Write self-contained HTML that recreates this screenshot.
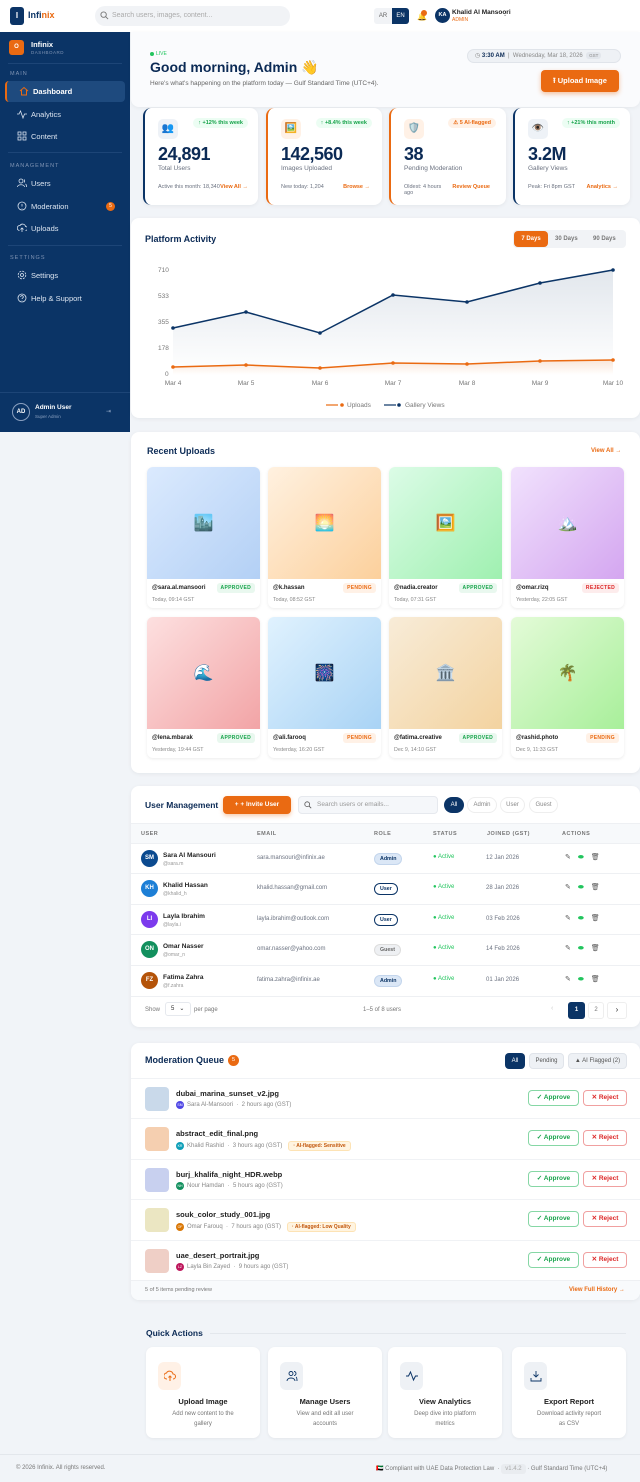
<!DOCTYPE html>
<html><head><meta charset="utf-8">
<style>
*{box-sizing:border-box;margin:0;padding:0}
body{width:640px;height:1482px;background:#f1f4f8;font-family:"Liberation Sans",sans-serif;position:relative;overflow:hidden;color:#1f2937}
.a{position:absolute}
.card{position:absolute;background:#fff;border-radius:8px;box-shadow:0 1px 4px rgba(0,0,0,.06)}
.nav{position:absolute;left:5px;width:120px;height:21px;font-size:7.5px;color:#dbe4f0;display:flex;align-items:center;padding-left:26px}
.nav svg{position:absolute;left:12px;top:5px}
.sec{position:absolute;left:10px;font-size:5.5px;letter-spacing:1px;color:#7f93b3}
.stat{position:absolute;top:108px;height:97px;background:#fff;border-radius:8px;border-left:2px solid #0b3466;box-shadow:0 1px 4px rgba(0,0,0,.06)}
.stat .ic{position:absolute;left:13px;top:11px;width:20px;height:20px;border-radius:5px;background:#eef2f7;font-size:10px;text-align:center;line-height:20px}
.stat .bd{position:absolute;right:10px;top:10px;font-size:5.5px;font-weight:bold;color:#16a34a;background:#ecfdf3;padding:2px 5px;border-radius:6px}
.stat .n{position:absolute;left:13px;top:36px;font-size:18px;font-weight:bold;color:#0b2a55;letter-spacing:-.5px}
.stat .l{position:absolute;left:13px;top:57px;font-size:6.5px;color:#6b7280}
.stat .f{position:absolute;left:13px;top:76px;font-size:5.5px;color:#6b7280}
.stat .k{position:absolute;right:12px;top:76px;font-size:5.5px;font-weight:bold;color:#ea6a12}
.tile{position:absolute;width:113px;height:141px;background:#fff;border-radius:6px;box-shadow:0 1px 3px rgba(0,0,0,.08);overflow:hidden}
.tile .im{height:112px;display:flex;align-items:center;justify-content:center;font-size:16px}
.tile .u{position:absolute;left:5px;top:118px;font-size:6px;font-weight:bold;color:#222}
.tile .t{position:absolute;left:5px;top:130px;font-size:5.3px;color:#888}
.tile .s{position:absolute;right:5px;top:116px;font-size:5px;font-weight:bold;padding:2px 4px;border-radius:3px;letter-spacing:.3px}
.ap{color:#16a34a;background:#e9f8ef}.pe{color:#ea6a12;background:#fff1e6}.re{color:#dc2626;background:#fdecec}
.row{position:absolute;left:0;width:510px;height:30px;border-top:1px solid #eef0f3;font-size:6px;color:#6b7280}
.row .av{position:absolute;left:10px;top:6px;width:17px;height:17px;border-radius:50%;color:#fff;font-size:6px;font-weight:bold;text-align:center;line-height:17px}
.row .nm{position:absolute;left:32px;top:8px;font-size:6.5px;font-weight:bold;color:#222}
.row .hd{position:absolute;left:32px;top:17px;font-size:5px;color:#999}
.row .em{position:absolute;left:126px;top:11px}
.row .rl{position:absolute;left:243px;top:9px;font-size:5.3px;font-weight:bold;padding:2px 5px;border-radius:6px}
.row .st{position:absolute;left:302px;top:10px;color:#22c55e}
.row .jd{position:absolute;left:355px;top:11px}
.row .ac{position:absolute;left:434px;top:9px;font-size:7px;color:#555;letter-spacing:7px}
.adm{background:#dbe7f6;color:#0b3466;border:1px solid #c3d5ec}.usr{background:#fff;color:#0b3466;border:1px solid #0b3466}.gst{background:#eef0f3;color:#666;border:1px solid #ddd}
.mq{position:absolute;left:0;width:510px;height:40px;border-top:1px solid #f0f2f5}
.mq .th{position:absolute;left:14px;top:8px;width:24px;height:24px;border-radius:4px}
.mq .fn{position:absolute;left:45px;top:10px;font-size:7.5px;font-weight:bold;color:#222}
.mq .by{position:absolute;left:45px;top:22px;font-size:6px;color:#888;display:flex;align-items:center;gap:3px}
.mq .by i{display:inline-block;width:8px;height:8px;border-radius:50%;font-style:normal;color:#fff;font-size:3.5px;text-align:center;line-height:8px}
.mq .fl{font-size:5px;font-weight:bold;color:#c2570c;background:#fff4e0;border:1px solid #fde3b5;padding:1px 4px;border-radius:3px;margin-left:3px}
.mq .bt{position:absolute;top:11px;height:16px;border-radius:4px;font-size:6.5px;font-weight:bold;text-align:center;line-height:14px}
.mq .ok{left:397px;width:51px;border:1px solid #86d7a5;color:#16a34a}
.mq .no{left:452px;width:44px;border:1px solid #f0a0a0;color:#dc2626}
.qa{position:absolute;top:1347px;width:114px;height:91px;background:#fff;border-radius:7px;box-shadow:0 1px 3px rgba(0,0,0,.06);text-align:center}
.qa .ic{position:absolute;left:12px;top:15px;width:23px;height:28px;border-radius:6px;background:#eef1f5}
.qa .h{position:absolute;left:0;right:0;top:50px;font-size:7.5px;font-weight:bold;color:#222}
.qa .d{position:absolute;left:22px;right:22px;top:62px;font-size:6px;color:#777;line-height:10px}
</style></head><body>

<!-- header -->
<div class="a" style="left:0;top:0;width:640px;height:32px;background:#fff;box-shadow:0 1px 3px rgba(0,0,0,.06)"></div>
<div class="a" style="left:10px;top:7px;width:14px;height:18px;border-radius:3px;background:#0b3466;color:#fff;font-size:8px;font-weight:bold;text-align:center;line-height:18px">I</div>
<div class="a" style="left:28px;top:10px;font-size:9px;font-weight:bold;color:#0b3466">Infi<span style="color:#ea6a12">nix</span></div>
<div class="a" style="left:95px;top:6px;width:195px;height:20px;border-radius:10px;background:#f1f3f6"></div>
<svg class="a" style="left:100px;top:11px" width="9" height="9" viewBox="0 0 10 10"><circle cx="4" cy="4" r="3" fill="none" stroke="#777" stroke-width="1"/><path d="M6.3 6.3L9 9" stroke="#777"/></svg>
<div class="a" style="left:112px;top:12px;font-size:7px;color:#aaa">Search users, images, content...</div>
<div class="a" style="left:374px;top:8px;width:18px;height:16px;background:#f1f3f6;border-radius:3px 0 0 3px;font-size:6px;color:#666;text-align:center;line-height:16px">AR</div>
<div class="a" style="left:392px;top:8px;width:17px;height:16px;background:#0b3466;border-radius:0 3px 3px 0;font-size:6px;color:#fff;text-align:center;line-height:16px">EN</div>
<div class="a" style="left:417px;top:12px;font-size:8px;color:#0b3466">🔔</div>
<div class="a" style="left:421px;top:10px;width:6px;height:6px;border-radius:50%;background:#ea6a12"></div>
<div class="a" style="left:435px;top:8px;width:15px;height:15px;border-radius:50%;background:#0b3466;color:#fff;font-size:5.5px;font-weight:bold;text-align:center;line-height:15px">KA</div>
<div class="a" style="left:452px;top:9px;font-size:6.5px;font-weight:bold;color:#222">Khalid Al Mansoori</div>
<div class="a" style="left:452px;top:17px;font-size:5px;color:#ea6a12">ADMIN</div>
<div class="a" style="left:503px;top:12px;font-size:5px;color:#777">⌄</div>

<!-- sidebar -->
<div class="a" style="left:0;top:32px;width:130px;height:400px;background:#0b3466"></div>
<div class="a" style="left:9px;top:40px;width:15px;height:15px;border-radius:3px;background:#ea6a12;color:#fff;font-size:6px;font-weight:bold;text-align:center;line-height:15px">O</div>
<div class="a" style="left:31px;top:40px;font-size:7.5px;font-weight:bold;color:#fff">Infinix</div>
<div class="a" style="left:31px;top:50px;font-size:4.5px;color:#7f93b3;letter-spacing:.5px">DASHBOARD</div>
<div class="a" style="left:8px;top:63px;width:114px;height:1px;background:#1d4577"></div>
<div class="sec" style="top:71px">MAIN</div>
<div class="nav" style="top:81px;background:#1e4a7e;border-left:2px solid #ea6a12;border-radius:4px;color:#fff;font-weight:bold"><svg width="10" height="10" viewBox="0 0 10 10"><path d="M1 5L5 1.5 9 5M2.5 4v5h5V4" fill="none" stroke="#ea6a12"/></svg>Dashboard</div>
<div class="nav" style="top:104px"><svg width="10" height="10" viewBox="0 0 10 10"><path d="M0 5h2l1.5-3 2.5 7 1.5-4H10" fill="none" stroke="#dbe4f0" stroke-width=".8"/></svg>Analytics</div>
<div class="nav" style="top:126px"><svg width="10" height="10" viewBox="0 0 10 10"><g fill="none" stroke="#dbe4f0" stroke-width=".8"><rect x="1" y="1" width="3" height="3"/><rect x="6" y="1" width="3" height="3"/><rect x="1" y="6" width="3" height="3"/><rect x="6" y="6" width="3" height="3"/></g></svg>Content</div>
<div class="a" style="left:8px;top:152px;width:114px;height:1px;background:#1d4577"></div>
<div class="sec" style="top:163px">MANAGEMENT</div>
<div class="nav" style="top:173px"><svg width="10" height="10" viewBox="0 0 10 10"><g fill="none" stroke="#dbe4f0" stroke-width=".8"><circle cx="4" cy="3" r="2"/><path d="M0.5 9c0-3 7-3 7 0M7 1.5a2 2 0 010 3M8.5 6c1 .5 1 2 1 3"/></g></svg>Users</div>
<div class="nav" style="top:196px"><svg width="10" height="10" viewBox="0 0 10 10"><circle cx="5" cy="5" r="4" fill="none" stroke="#dbe4f0" stroke-width=".8"/><path d="M5 3v2.5M5 7v.5" stroke="#dbe4f0" stroke-width=".8"/></svg>Moderation</div>
<div class="a" style="left:106px;top:202px;width:9px;height:9px;border-radius:50%;background:#ea6a12;color:#fff;font-size:5px;text-align:center;line-height:9px">5</div>
<div class="nav" style="top:218px"><svg width="10" height="10" viewBox="0 0 10 10"><path d="M2.5 7.5a2.5 2.5 0 01.5-5 3 3 0 015.5 1 2 2 0 010 4M5 9V5M3.5 6.5L5 5l1.5 1.5" fill="none" stroke="#dbe4f0" stroke-width=".8"/></svg>Uploads</div>
<div class="a" style="left:8px;top:245px;width:114px;height:1px;background:#1d4577"></div>
<div class="sec" style="top:255px">SETTINGS</div>
<div class="nav" style="top:265px"><svg width="10" height="10" viewBox="0 0 10 10"><circle cx="5" cy="5" r="3.8" fill="none" stroke="#dbe4f0" stroke-width=".8" stroke-dasharray="2 1"/><circle cx="5" cy="5" r="1.5" fill="none" stroke="#dbe4f0" stroke-width=".8"/></svg>Settings</div>
<div class="nav" style="top:288px"><svg width="10" height="10" viewBox="0 0 10 10"><circle cx="5" cy="5" r="4" fill="none" stroke="#dbe4f0" stroke-width=".8"/><path d="M3.7 4a1.3 1.3 0 112 1c-.6.3-.7.6-.7 1M5 7.3v.3" fill="none" stroke="#dbe4f0" stroke-width=".8"/></svg>Help &amp; Support</div>
<div class="a" style="left:0;top:392px;width:130px;height:1px;background:#1d4577"></div>
<div class="a" style="left:12px;top:403px;width:18px;height:18px;border-radius:50%;background:#0b3466;border:1px solid #8aa0c0;color:#fff;font-size:6px;font-weight:bold;text-align:center;line-height:16px">AD</div>
<div class="a" style="left:35px;top:404px;font-size:6.5px;font-weight:bold;color:#fff">Admin User</div>
<div class="a" style="left:35px;top:414px;font-size:4.5px;color:#8aa0c0">Super Admin</div>
<div class="a" style="left:106px;top:408px;font-size:6px;color:#8aa0c0">⇥</div>

<!-- hero -->
<div class="a" style="left:131px;top:32px;width:509px;height:75px;background:#fafbfd;border-radius:0 0 8px 8px;box-shadow:0 1px 4px rgba(0,0,0,.05)"></div>
<div class="a" style="left:150px;top:52px;width:4px;height:4px;border-radius:50%;background:#22c55e"></div>
<div class="a" style="left:156px;top:51px;font-size:5px;color:#22c55e">LIVE</div>
<div class="a" style="left:150px;top:59px;font-size:14px;font-weight:bold;color:#0b2a55">Good morning, Admin 👋</div>
<div class="a" style="left:150px;top:80px;font-size:6.5px;color:#666">Here's what's happening on the platform today — Gulf Standard Time (UTC+4).</div>
<div class="a" style="left:467px;top:49px;width:154px;height:14px;border-radius:7px;background:#eef1f5;border:1px solid #e0e4ea;font-size:6px;line-height:12px;color:#888;padding-left:7px">◷ <b style="color:#0b2a55">3:30 AM</b> &nbsp;|&nbsp; Wednesday, Mar 18, 2026 &nbsp;<span style="font-size:4.5px;background:#e2e6ec;padding:1px 3px;border-radius:3px">GST</span></div>
<div class="a" style="left:541px;top:70px;width:78px;height:22px;border-radius:4px;background:#ea6a12;color:#fff;font-size:7.5px;font-weight:bold;text-align:center;line-height:22px;box-shadow:0 2px 5px rgba(234,106,18,.4)">⭱ Upload Image</div>

<!-- stats -->
<div class="stat" style="left:143px;width:115px"><div class="ic">👥</div><div class="bd">↑ +12% this week</div><div class="n">24,891</div><div class="l">Total Users</div><div class="f">Active this month: 18,340</div><div class="k" style="right:10px">View All →</div></div>
<div class="stat" style="left:266px;width:116px;border-color:#ea6a12"><div class="ic" style="background:#fff1e6">🖼️</div><div class="bd">↑ +8.4% this week</div><div class="n">142,560</div><div class="l">Images Uploaded</div><div class="f">New today: 1,204</div><div class="k">Browse →</div></div>
<div class="stat" style="left:389px;width:117px;border-color:#ea6a12"><div class="ic" style="background:#fff1e6">🛡️</div><div class="bd" style="color:#ea6a12;background:#fff1e6">⚠ 5 AI-flagged</div><div class="n">38</div><div class="l">Pending Moderation</div><div class="f">Oldest: 4 hours<br>ago</div><div class="k" style="right:16px">Review Queue</div></div>
<div class="stat" style="left:513px;width:117px"><div class="ic">👁️</div><div class="bd">↑ +21% this month</div><div class="n">3.2M</div><div class="l">Gallery Views</div><div class="f">Peak: Fri 8pm GST</div><div class="k">Analytics →</div></div>

<!-- chart -->
<div class="card" style="left:131px;top:218px;width:509px;height:200px"></div>
<div class="a" style="left:145px;top:234px;font-size:9px;font-weight:bold;color:#0b2a55">Platform Activity</div>
<div class="a" style="left:513px;top:230px;width:113px;height:18px;border-radius:4px;background:#f1f3f6"></div>
<div class="a" style="left:514px;top:231px;width:34px;height:16px;border-radius:4px;background:#ea6a12;color:#fff;font-size:6px;font-weight:bold;text-align:center;line-height:16px">7 Days</div>
<div class="a" style="left:555px;top:236px;font-size:6px;color:#777;font-weight:bold">30 Days</div>
<div class="a" style="left:593px;top:236px;font-size:6px;color:#777;font-weight:bold">90 Days</div>
<svg class="a" style="left:131px;top:218px" width="509" height="200" viewBox="131 218 509 200">
<defs><linearGradient id="g1" x1="0" y1="0" x2="0" y2="1"><stop offset="0" stop-color="#0b3466" stop-opacity=".12"/><stop offset="1" stop-color="#0b3466" stop-opacity="0"/></linearGradient>
<linearGradient id="g2" x1="0" y1="0" x2="0" y2="1"><stop offset="0" stop-color="#ea6a12" stop-opacity=".15"/><stop offset="1" stop-color="#ea6a12" stop-opacity="0"/></linearGradient></defs>
<g font-family="Liberation Sans" font-size="6.5" fill="#777">
<text x="158" y="272">710</text><text x="158" y="298">533</text><text x="158" y="324">355</text><text x="158" y="350">178</text><text x="165" y="376">0</text>
<text x="173" y="385" text-anchor="middle">Mar 4</text><text x="246" y="385" text-anchor="middle">Mar 5</text><text x="320" y="385" text-anchor="middle">Mar 6</text><text x="393" y="385" text-anchor="middle">Mar 7</text><text x="467" y="385" text-anchor="middle">Mar 8</text><text x="540" y="385" text-anchor="middle">Mar 9</text><text x="613" y="385" text-anchor="middle">Mar 10</text>
<text x="347" y="407">Uploads</text><text x="405" y="407">Gallery Views</text></g>
<path d="M173 328L246 312L320 333L393 295L467 302L540 283L613 270L613 373L173 373Z" fill="url(#g1)"/>
<path d="M173 367L246 365L320 368L393 363L467 364L540 361L613 360L613 375L173 375Z" fill="url(#g2)"/>
<path d="M173 328L246 312L320 333L393 295L467 302L540 283L613 270" fill="none" stroke="#0b3466" stroke-width="1.5"/>
<path d="M173 367L246 365L320 368L393 363L467 364L540 361L613 360" fill="none" stroke="#ea6a12" stroke-width="1.5"/>
<g fill="#0b3466"><circle cx="173" cy="328" r="1.8"/><circle cx="246" cy="312" r="1.8"/><circle cx="320" cy="333" r="1.8"/><circle cx="393" cy="295" r="1.8"/><circle cx="467" cy="302" r="1.8"/><circle cx="540" cy="283" r="1.8"/><circle cx="613" cy="270" r="1.8"/></g>
<g fill="#ea6a12"><circle cx="173" cy="367" r="1.8"/><circle cx="246" cy="365" r="1.8"/><circle cx="320" cy="368" r="1.8"/><circle cx="393" cy="363" r="1.8"/><circle cx="467" cy="364" r="1.8"/><circle cx="540" cy="361" r="1.8"/><circle cx="613" cy="360" r="1.8"/></g>
<path d="M326 405h12" stroke="#ea6a12" stroke-width="1.2"/><circle cx="342" cy="405" r="1.8" fill="#ea6a12"/>
<path d="M384 405h12" stroke="#0b3466" stroke-width="1.2"/><circle cx="399" cy="405" r="1.8" fill="#0b3466"/>
</svg>

<!-- recent uploads -->
<div class="card" style="left:131px;top:432px;width:509px;height:341px"></div>
<div class="a" style="left:147px;top:446px;font-size:9px;font-weight:bold;color:#0b2a55">Recent Uploads</div>
<div class="a" style="left:591px;top:448px;font-size:6px;font-weight:bold;color:#ea6a12">View All →</div>
<div class="tile" style="left:147px;top:467px"><div class="im" style="background:linear-gradient(135deg,#dbeafe,#b3d0f5)">🏙️</div><div class="u">@sara.al.mansoori</div><div class="t">Today, 09:14 GST</div><div class="s ap">APPROVED</div></div>
<div class="tile" style="left:268px;top:467px"><div class="im" style="background:linear-gradient(135deg,#fff1e0,#fcd09c)">🌅</div><div class="u">@k.hassan</div><div class="t">Today, 08:52 GST</div><div class="s pe">PENDING</div></div>
<div class="tile" style="left:389px;top:467px"><div class="im" style="background:linear-gradient(135deg,#dcfce7,#9ff0b0)">🖼️</div><div class="u">@nadia.creator</div><div class="t">Today, 07:31 GST</div><div class="s ap">APPROVED</div></div>
<div class="tile" style="left:511px;top:467px"><div class="im" style="background:linear-gradient(135deg,#f1e2fd,#d4a6f0)">🏔️</div><div class="u">@omar.rizq</div><div class="t">Yesterday, 22:05 GST</div><div class="s re">REJECTED</div></div>
<div class="tile" style="left:147px;top:617px"><div class="im" style="background:linear-gradient(135deg,#fde0e0,#f2a4a6)">🌊</div><div class="u">@lena.mbarak</div><div class="t">Yesterday, 19:44 GST</div><div class="s ap">APPROVED</div></div>
<div class="tile" style="left:268px;top:617px"><div class="im" style="background:linear-gradient(135deg,#e0f2fe,#a9d3f5)">🎆</div><div class="u">@ali.farooq</div><div class="t">Yesterday, 16:20 GST</div><div class="s pe">PENDING</div></div>
<div class="tile" style="left:389px;top:617px"><div class="im" style="background:linear-gradient(135deg,#f8ecd8,#f3d3a0)">🏛️</div><div class="u">@fatima.creative</div><div class="t">Dec 9, 14:10 GST</div><div class="s ap">APPROVED</div></div>
<div class="tile" style="left:511px;top:617px"><div class="im" style="background:linear-gradient(135deg,#e4fbd8,#a8ef9a)">🌴</div><div class="u">@rashid.photo</div><div class="t">Dec 9, 11:33 GST</div><div class="s pe">PENDING</div></div>

<!-- user management -->
<div class="card" style="left:131px;top:786px;width:509px;height:241px;overflow:hidden">
<div class="a" style="left:14px;top:14px;font-size:8.5px;font-weight:bold;color:#0b2a55">User Management</div>
<div class="a" style="left:92px;top:10px;width:68px;height:18px;border-radius:4px;background:#ea6a12;color:#fff;font-size:6.5px;font-weight:bold;text-align:center;line-height:18px;box-shadow:0 2px 4px rgba(234,106,18,.35)">+ + Invite User</div>
<div class="a" style="left:167px;top:10px;width:140px;height:18px;border-radius:4px;background:#f5f7fa;border:1px solid #e6e9ee;font-size:6.5px;color:#999;line-height:16px;padding-left:18px">Search users or emails...</div>
<svg class="a" style="left:173px;top:15px" width="8" height="8" viewBox="0 0 10 10"><circle cx="4" cy="4" r="3" fill="none" stroke="#555"/><path d="M6.3 6.3L9 9" stroke="#555"/></svg>
<div class="a" style="left:313px;top:11px;width:20px;height:16px;border-radius:8px;background:#0b3466;color:#fff;font-size:6px;text-align:center;line-height:16px">All</div>
<div class="a" style="left:336px;top:11px;width:30px;height:16px;border-radius:8px;border:1px solid #eee;color:#888;font-size:6px;text-align:center;line-height:14px">Admin</div>
<div class="a" style="left:369px;top:11px;width:25px;height:16px;border-radius:8px;border:1px solid #eee;color:#888;font-size:6px;text-align:center;line-height:14px">User</div>
<div class="a" style="left:398px;top:11px;width:29px;height:16px;border-radius:8px;border:1px solid #eee;color:#888;font-size:6px;text-align:center;line-height:14px">Guest</div>
<div class="a" style="left:0;top:37px;width:509px;height:20px;background:#f7f9fb;border-top:1px solid #eef0f3;font-size:5.5px;font-weight:bold;color:#777;letter-spacing:.5px">
<span class="a" style="left:10px;top:7px">USER</span><span class="a" style="left:126px;top:7px">EMAIL</span><span class="a" style="left:243px;top:7px">ROLE</span><span class="a" style="left:302px;top:7px">STATUS</span><span class="a" style="left:356px;top:7px">JOINED (GST)</span><span class="a" style="left:431px;top:7px">ACTIONS</span></div>
<div class="row" style="top:57px"><div class="av" style="background:#0b4a8f">SM</div><div class="nm">Sara Al Mansouri</div><div class="hd">@sara.m</div><div class="em">sara.mansouri@infinix.ae</div><div class="rl adm">Admin</div><div class="st">● Active</div><div class="jd">12 Jan 2026</div><div class="ac">✎<span style="color:#22c55e">⬬</span>🗑</div></div>
<div class="row" style="top:87px"><div class="av" style="background:#1d7fd6">KH</div><div class="nm">Khalid Hassan</div><div class="hd">@khalid_h</div><div class="em">khalid.hassan@gmail.com</div><div class="rl usr">User</div><div class="st">● Active</div><div class="jd">28 Jan 2026</div><div class="ac">✎<span style="color:#22c55e">⬬</span>🗑</div></div>
<div class="row" style="top:118px"><div class="av" style="background:#7c3aed">LI</div><div class="nm">Layla Ibrahim</div><div class="hd">@layla.i</div><div class="em">layla.ibrahim@outlook.com</div><div class="rl usr">User</div><div class="st">● Active</div><div class="jd">03 Feb 2026</div><div class="ac">✎<span style="color:#22c55e">⬬</span>🗑</div></div>
<div class="row" style="top:148px"><div class="av" style="background:#12905e">ON</div><div class="nm">Omar Nasser</div><div class="hd">@omar_n</div><div class="em">omar.nasser@yahoo.com</div><div class="rl gst">Guest</div><div class="st">● Active</div><div class="jd">14 Feb 2026</div><div class="ac">✎<span style="color:#22c55e">⬬</span>🗑</div></div>
<div class="row" style="top:179px"><div class="av" style="background:#b45309">FZ</div><div class="nm">Fatima Zahra</div><div class="hd">@f.zahra</div><div class="em">fatima.zahra@infinix.ae</div><div class="rl adm">Admin</div><div class="st">● Active</div><div class="jd">01 Jan 2026</div><div class="ac">✎<span style="color:#22c55e">⬬</span>🗑</div></div>
<div class="a" style="left:0;top:210px;width:509px;height:1px;background:#eef0f3"></div>
<div class="a" style="left:14px;top:221px;font-size:6px;color:#777">Show</div>
<div class="a" style="left:34px;top:216px;width:26px;height:14px;border:1px solid #e6e9ee;border-radius:3px;font-size:6px;color:#333;line-height:12px;padding-left:5px">5 &nbsp; ⌄</div>
<div class="a" style="left:63px;top:221px;font-size:6px;color:#777">per page</div>
<div class="a" style="left:232px;top:221px;font-size:6px;color:#777">1–5 of 8 users</div>
<div class="a" style="left:420px;top:219px;font-size:7px;color:#ccc">‹</div>
<div class="a" style="left:437px;top:216px;width:17px;height:17px;border-radius:3px;background:#0b3466;color:#fff;font-size:6px;font-weight:bold;text-align:center;line-height:17px">1</div>
<div class="a" style="left:457px;top:216px;width:16px;height:17px;border-radius:3px;border:1px solid #eee;color:#777;font-size:6px;text-align:center;line-height:15px">2</div>
<div class="a" style="left:476px;top:216px;width:20px;height:17px;border-radius:3px;border:1px solid #eee;color:#333;font-size:8px;text-align:center;line-height:14px">›</div>
</div>

<!-- moderation -->
<div class="card" style="left:131px;top:1043px;width:509px;height:257px;overflow:hidden">
<div class="a" style="left:14px;top:12px;font-size:9px;font-weight:bold;color:#0b2a55">Moderation Queue</div>
<div class="a" style="left:97px;top:12px;width:11px;height:11px;border-radius:50%;background:#ea6a12;color:#fff;font-size:5.5px;text-align:center;line-height:11px">5</div>
<div class="a" style="left:374px;top:10px;width:20px;height:16px;border-radius:4px;background:#0b3466;color:#fff;font-size:6px;text-align:center;line-height:16px">All</div>
<div class="a" style="left:398px;top:10px;width:35px;height:16px;border-radius:4px;background:#eef1f5;border:1px solid #e0e4ea;color:#555;font-size:6px;text-align:center;line-height:14px">Pending</div>
<div class="a" style="left:437px;top:10px;width:59px;height:16px;border-radius:4px;background:#eef1f5;border:1px solid #e0e4ea;color:#555;font-size:6px;text-align:center;line-height:14px">▲ AI Flagged (2)</div>
<div class="mq" style="top:35px"><div class="th" style="background:#c9d9ea"></div><div class="fn">dubai_marina_sunset_v2.jpg</div><div class="by"><i style="background:#4f46e5">SM</i>Sara Al-Mansoori &nbsp;·&nbsp; 2 hours ago (GST)</div><div class="bt ok">✓ Approve</div><div class="bt no">✕ Reject</div></div>
<div class="mq" style="top:75px"><div class="th" style="background:#f5cfb0"></div><div class="fn">abstract_edit_final.png</div><div class="by"><i style="background:#0e9fb8">KR</i>Khalid Rashid &nbsp;·&nbsp; 3 hours ago (GST)<span class="fl">· AI-flagged: Sensitive</span></div><div class="bt ok">✓ Approve</div><div class="bt no">✕ Reject</div></div>
<div class="mq" style="top:116px"><div class="th" style="background:#c8d0ef"></div><div class="fn">burj_khalifa_night_HDR.webp</div><div class="by"><i style="background:#12905e">NH</i>Nour Hamdan &nbsp;·&nbsp; 5 hours ago (GST)</div><div class="bt ok">✓ Approve</div><div class="bt no">✕ Reject</div></div>
<div class="mq" style="top:156px"><div class="th" style="background:#ebe6c2"></div><div class="fn">souk_color_study_001.jpg</div><div class="by"><i style="background:#d97706">OF</i>Omar Farouq &nbsp;·&nbsp; 7 hours ago (GST)<span class="fl">· AI-flagged: Low Quality</span></div><div class="bt ok">✓ Approve</div><div class="bt no">✕ Reject</div></div>
<div class="mq" style="top:197px"><div class="th" style="background:#efcfc6"></div><div class="fn">uae_desert_portrait.jpg</div><div class="by"><i style="background:#be185d">LZ</i>Layla Bin Zayed &nbsp;·&nbsp; 9 hours ago (GST)</div><div class="bt ok">✓ Approve</div><div class="bt no">✕ Reject</div></div>
<div class="a" style="left:0;top:237px;width:509px;height:20px;background:#f8fafc;border-top:1px solid #eef0f3"></div>
<div class="a" style="left:14px;top:244px;font-size:5.5px;color:#777">5 of 5 items pending review</div>
<div class="a" style="left:438px;top:244px;font-size:6px;font-weight:bold;color:#ea6a12">View Full History →</div>
</div>

<!-- quick actions -->
<div class="a" style="left:146px;top:1328px;font-size:8.5px;font-weight:bold;color:#0b2a55">Quick Actions</div>
<div class="a" style="left:210px;top:1333px;width:416px;height:1px;background:#e3e7ec"></div>
<div class="qa" style="left:146px"><div class="ic" style="background:#fff1e6;left:12px"><svg style="margin-top:8px" width="12" height="12" viewBox="0 0 12 12"><path d="M3 9a3 3 0 01-.5-6 3.5 3.5 0 016.5 1 2.5 2.5 0 010 5M6 11V6M4.5 7.5L6 6l1.5 1.5" fill="none" stroke="#ea6a12"/></svg></div><div class="h">Upload Image</div><div class="d">Add new content to the gallery</div></div>
<div class="qa" style="left:268px"><div class="ic"><svg style="margin-top:8px" width="12" height="12" viewBox="0 0 12 12"><g fill="none" stroke="#0b3466" stroke-width=".9"><circle cx="5" cy="3.5" r="2"/><path d="M1 11c0-4 8-4 8 0M8 1.5a2 2 0 010 4M10 7c1 .5 1 2.5 1 4"/></g></svg></div><div class="h">Manage Users</div><div class="d">View and edit all user accounts</div></div>
<div class="qa" style="left:388px"><div class="ic"><svg style="margin-top:8px" width="12" height="12" viewBox="0 0 12 12"><path d="M0 6h2.5l2-4 3 8 2-4H12" fill="none" stroke="#0b3466" stroke-width="1"/></svg></div><div class="h">View Analytics</div><div class="d">Deep dive into platform metrics</div></div>
<div class="qa" style="left:512px"><div class="ic"><svg style="margin-top:8px" width="12" height="12" viewBox="0 0 12 12"><path d="M6 1v6M3.5 4.5L6 7l2.5-2.5M1 8v3h10V8" fill="none" stroke="#0b3466" stroke-width=".9"/></svg></div><div class="h">Export Report</div><div class="d">Download activity report as CSV</div></div>

<!-- footer -->
<div class="a" style="left:0;top:1454px;width:640px;height:1px;background:#e3e7ec"></div>
<div class="a" style="left:16px;top:1465px;font-size:6px;color:#777">© 2026 Infinix. All rights reserved.</div>
<div class="a" style="left:376px;top:1465px;font-size:6px;color:#777">🇦🇪 Compliant with UAE Data Protection Law &nbsp;· <span style="background:#e9ecf0;padding:2px 4px;border-radius:3px;color:#aaa">v1.4.2</span> · Gulf Standard Time (UTC+4)</div>
</body></html>
